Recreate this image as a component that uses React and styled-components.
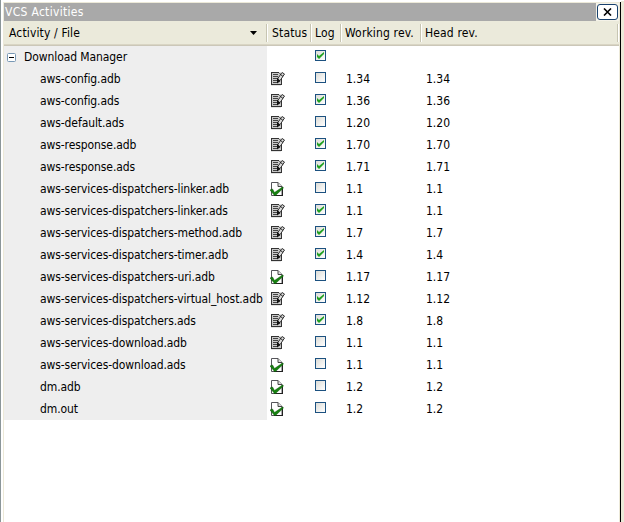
import React from "react";
import styled, { createGlobalStyle } from "styled-components";

const GlobalStyle = createGlobalStyle`
  * { box-sizing: border-box; }
  body { margin: 0; background: #fff; overflow: hidden; }
`;

const columns = "263px 44px 30px 80px 1fr";

const Frame = styled.div`
  display: grid;
  grid-template-columns: 617px 4px;
  width: 624px;
  height: 522px;
  padding-left: 2px;
  border-left: 1px solid #8b9698;
  background: #fff;
  color: #000;
  font: 12px/22px "DejaVu Sans Condensed", "DejaVu Sans", sans-serif;
  font-stretch: condensed;
  letter-spacing: -0.09px;
`;

const Panel = styled.section`
  margin-top: 2px;
  border: solid #ece9d8;
  border-width: 1px 1px 0;
  box-shadow: 1px 0 #000;
`;

const RightEdge = styled.div`
  margin: 1px 0 0 1px;
  background: #ece9d8;
`;

const TitleBar = styled.header`
  display: flex;
  justify-content: space-between;
  height: 18px;
  background: #a9a9a9;
  color: #fff;
  line-height: 18px;
`;

const Title = styled.span`
  padding-left: 1px;
  letter-spacing: 0.3px;
`;

const CloseSlot = styled.div`
  width: 23px;
  padding: 1px;
  background: #f4f2e8;
`;

const CloseButton = styled.button`
  display: grid;
  place-items: center;
  width: 21px;
  height: 16px;
  padding: 0;
  border: 1px solid #17406d;
  border-radius: 3px;
  background: #fff;
`;

const HeaderRow = styled.div`
  display: grid;
  grid-template-columns: ${columns};
  height: 25px;
  padding-right: 1px;
  background: #ebeadb;
  border-bottom: 1px solid #cbc7b8;
  box-shadow: inset 0 -1px #d9d5c4;
`;

const HeaderCell = styled.div`
  display: flex;
  align-items: center;
  justify-content: space-between;
  height: 18px;
  margin-top: 3px;
  padding-left: ${(p) => p.$inset ?? 5}px;
  border-right: 1px solid #c7c5b2;
  box-shadow: 1px 0 #fff;
  letter-spacing: 0.15px;
  white-space: nowrap;
`;

const SortArrow = styled.svg`
  width: 7px;
  height: 4px;
  margin-right: 9px;
`;

const Row = styled.div`
  display: grid;
  grid-template-columns: ${columns};
  height: 22px;
`;

const NameCell = styled.div`
  display: flex;
  align-items: center;
  gap: 8px;
  padding-left: ${(p) => (p.$root ? 3 : 36)}px;
  background: #eee;
  white-space: nowrap;
`;

const IconCell = styled.div`
  padding: 3px 0 0 3px;
  line-height: 0;
`;

const LogCell = styled.div`
  padding: 4px 0 0 4px;
`;

const Revision = styled.div`
  padding-left: 5px;
  letter-spacing: 0;
`;

const CheckFrame = styled.div`
  display: grid;
  place-items: center;
  width: 11px;
  height: 11px;
  border: 1px solid #1c5180;
  background: linear-gradient(135deg, #dcdcd7, #fff);
`;

const Toggle = styled.svg`
  width: 9px;
  height: 9px;
  margin-top: 1px;
`;

function Checkbox({ checked }) {
  return (
    <CheckFrame>
      {checked && (
        <svg width="9" height="9" viewBox="0 0 9 9">
          <path d="M1 3v3l2 2 5-5V1L3 5z" fill="#21a121" />
        </svg>
      )}
    </CheckFrame>
  );
}

function CheckedPage() {
  return (
    <svg width="16" height="16" viewBox="0 0 16 16">
      <path d="M1.5 1.5H8l4 4v9H1.5z" fill="#fff" stroke="#55555a" />
      <path d="M8 1.5v4h4" fill="#ddd" stroke="#444" />
      <path d="M12.5 6v9M4 14.500h9" stroke="#222" />
      <path d="M0 9l2.500-1 2 3.500L12.500 6l1 1L5 15z" fill="#17820f" stroke="#0c520b" strokeWidth=".5" />
    </svg>
  );
}

function EditedPage() {
  return (
    <svg width="16" height="16" viewBox="0 0 16 16">
      <path d="M1 1.500h10v13H1z" fill="#c9c9c9" />
      <path d="M1 1.500h8M1.500 1v13M1 13.500h10" stroke="#333" />
      <path d="M3 3.500h5M3 5.500h5M3 7.500h4M3 9.500h4M3 11.500h5" stroke="#444" />
      <path d="M12 1.500l2.500 1.500L10.500 9 8 11l-.5-3z" fill="#ddd" stroke="#333" />
      <path d="M9.500 2.500l3.500 3" stroke="#222" />
      <path d="M7 6.500l3.500 3.500L7 12.500z" fill="#111" />
      <path d="M11.500 8v6" stroke="#333" />
    </svg>
  );
}

const files = [
  ["aws-config.adb", "edit", false, "1.34"],
  ["aws-config.ads", "edit", true, "1.36"],
  ["aws-default.ads", "edit", false, "1.20"],
  ["aws-response.adb", "edit", true, "1.70"],
  ["aws-response.ads", "edit", true, "1.71"],
  ["aws-services-dispatchers-linker.adb", "ok", false, "1.1"],
  ["aws-services-dispatchers-linker.ads", "edit", true, "1.1"],
  ["aws-services-dispatchers-method.adb", "edit", true, "1.7"],
  ["aws-services-dispatchers-timer.adb", "edit", true, "1.4"],
  ["aws-services-dispatchers-uri.adb", "ok", false, "1.17"],
  ["aws-services-dispatchers-virtual_host.adb", "edit", true, "1.12"],
  ["aws-services-dispatchers.ads", "edit", true, "1.8"],
  ["aws-services-download.adb", "edit", false, "1.1"],
  ["aws-services-download.ads", "ok", false, "1.1"],
  ["dm.adb", "ok", false, "1.2"],
  ["dm.out", "ok", false, "1.2"],
];

export default function App() {
  return (
    <Frame>
      <GlobalStyle />
      <Panel>
        <TitleBar>
          <Title>VCS Activities</Title>
          <CloseSlot>
            <CloseButton aria-label="Close">
              <svg width="9" height="8" viewBox="0 0 9 8">
                <path d="M1 .5l7 7M8 .5l-7 7" stroke="#000" strokeWidth="1.6" />
              </svg>
            </CloseButton>
          </CloseSlot>
        </TitleBar>
        <HeaderRow>
          <HeaderCell>
            Activity / File
            <SortArrow viewBox="0 0 7 4"><path d="M0 0h7L3.5 4z" /></SortArrow>
          </HeaderCell>
          <HeaderCell>Status</HeaderCell>
          <HeaderCell $inset={4}>Log</HeaderCell>
          <HeaderCell $inset={4}>Working rev.</HeaderCell>
          <HeaderCell $inset={4}>Head rev.</HeaderCell>
        </HeaderRow>
        <Row>
          <NameCell $root>
            <Toggle viewBox="0 0 9 9">
              <rect x=".5" y=".5" width="8" height="8" rx="1" fill="#fff" stroke="#7898b5" />
              <path d="M2 4.500h5" stroke="#000" />
            </Toggle>
            Download Manager
          </NameCell>
          <div />
          <LogCell><Checkbox checked /></LogCell>
        </Row>
        {files.map(([name, kind, logged, rev]) => (
          <Row key={name}>
            <NameCell>{name}</NameCell>
            <IconCell>{kind === "ok" ? <CheckedPage /> : <EditedPage />}</IconCell>
            <LogCell><Checkbox checked={logged} /></LogCell>
            <Revision>{rev}</Revision>
            <Revision>{rev}</Revision>
          </Row>
        ))}
      </Panel>
      <RightEdge />
    </Frame>
  );
}
